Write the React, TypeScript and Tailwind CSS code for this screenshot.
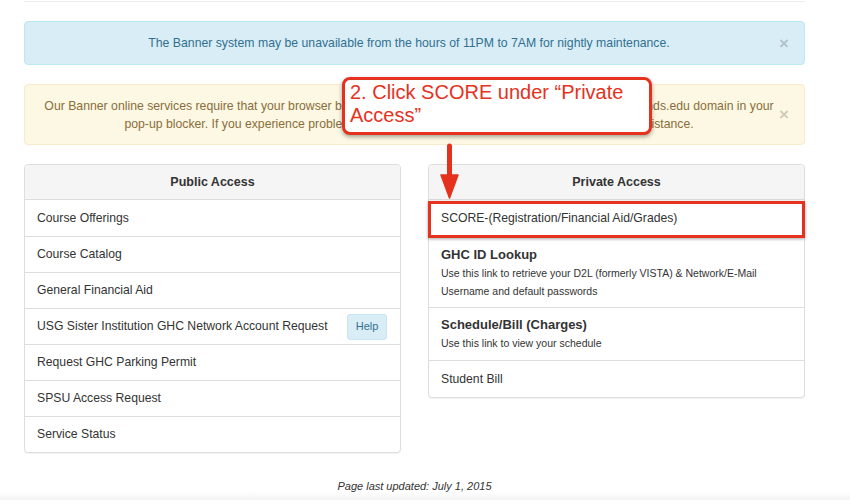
import React from 'react'

const publicLinks = [
  'Course Offerings',
  'Course Catalog',
  'General Financial Aid',
  'USG Sister Institution GHC Network Account Request',
  'Request GHC Parking Permit',
  'SPSU Access Request',
  'Service Status'
]

function CloseX() {
  return (
    <span className="w-[12px] shrink-0 text-center text-[17px] font-bold leading-none text-black/20">×</span>
  )
}

export default function App() {
  return (
    <div className="relative h-[500px] w-[850px] overflow-hidden bg-white font-['Liberation_Sans',Arial,sans-serif] text-[#333]">
      <div className="absolute inset-x-0 bottom-0 h-[8px] bg-gradient-to-b from-white to-[#f3f3f3]" />

      <div className="relative ml-[24px] w-[781px]">
        <div className="h-[2px] border-b border-[#eee]" />

        {/* Info alert */}
        <div className="mt-[19px] flex h-[44px] items-center rounded-[4px] border border-[#bce8f1] bg-[#d9edf7] pl-[15px] pr-[14px] text-[12.25px] text-[#31708f]">
          <p className="flex-1 text-center">
            The Banner system may be unavailable from the hours of 11PM to 7AM for nightly maintenance.
          </p>
          <CloseX />
        </div>

        {/* Warning alert */}
        <div className="mt-[19px] flex h-[61px] items-center rounded-[4px] border border-[#faebcc] bg-[#fcf8e3] pl-[15px] pr-[14px] text-[12.25px] leading-[18px] text-[#8a6d3b]">
          <p className="flex-1 text-center">
            Our Banner online services require that your browser be configured to allow all pop-up windows from the highlands.edu domain in your
            <br />
            pop-up blocker. If you experience problems, please contact the GHC Help Desk for additional assistance.
          </p>
          <CloseX />
        </div>

        {/* Panels */}
        <div className="mt-[19px] grid grid-cols-2 items-start gap-[27px]">
          <div className="overflow-hidden rounded-[4px] border border-[#ddd] bg-white shadow-[0_1px_1px_rgba(0,0,0,0.05)]">
            <div className="flex h-[35px] items-center justify-center border-b border-[#ddd] bg-[#f5f5f5] text-[12.5px] font-bold">
              Public Access
            </div>
            {publicLinks.map((name, i) => (
              <div
                key={name}
                className={`flex h-[36px] items-center justify-between pl-[12px] pr-[13px] text-[12.2px] ${i > 0 ? 'border-t border-[#ddd]' : ''}`}
              >
                <span>{name}</span>
                {name.startsWith('USG') && (
                  <span className="flex h-[26px] w-[40px] items-center justify-center rounded-[3px] border border-[#c9e4f2] bg-[#d9edf7] text-[11px] text-[#31708f]">
                    Help
                  </span>
                )}
              </div>
            ))}
          </div>

          <div className="rounded-[4px] border border-[#ddd] bg-white shadow-[0_1px_1px_rgba(0,0,0,0.05)]">
            <div className="flex h-[35px] items-center justify-center rounded-t-[4px] border-b border-[#ddd] bg-[#f5f5f5] text-[12.5px] font-bold">
              Private Access
            </div>
            <div className="relative flex h-[36px] items-center pl-[12px] text-[12.2px]">
              <span>SCORE-(Registration/Financial Aid/Grades)</span>
              <div className="absolute -left-px -right-px top-[1px] -bottom-[2px] border-[3px] border-[#e4321e] shadow-[0_1px_3px_rgba(0,0,0,0.35)]" />
            </div>
            <div className="border-t border-[#ddd] px-[12px] pt-[9px] pb-[7px]">
              <div className="text-[13px] font-bold leading-[18px]">GHC ID Lookup</div>
              <div className="text-[10.5px] leading-[18px]">
                Use this link to retrieve your D2L (formerly VISTA) &amp; Network/E-Mail
                <br />
                Username and default passwords
              </div>
            </div>
            <div className="border-t border-[#ddd] px-[12px] pt-[8px] pb-[8px]">
              <div className="text-[13px] font-bold leading-[18px]">Schedule/Bill (Charges)</div>
              <div className="text-[10.5px] leading-[18px]">Use this link to view your schedule</div>
            </div>
            <div className="flex h-[37px] items-center border-t border-[#ddd] pl-[12px] text-[12.2px]">
              Student Bill
            </div>
          </div>
        </div>

        <p className="mt-[26px] text-center text-[11px] italic leading-[14px] text-[#333]">Page last updated: July 1, 2015</p>
      </div>

      {/* Annotation callout */}
      <div className="absolute left-[342px] top-[77px] h-[58px] w-[310px] rounded-[8px] border-[3px] border-[#e4321e] bg-white px-[5px] pt-[1px] text-[20px] leading-[23px] text-[#e4321e] shadow-[0_2px_4px_rgba(0,0,0,0.35)]">
        2. Click SCORE under “Private
        <br />
        Access”
      </div>

      {/* Arrow */}
      <svg className="absolute left-[440px] top-[142px]" width="19" height="58" viewBox="0 0 19 58">
        <line x1="9.5" y1="4" x2="9.5" y2="36" stroke="#e4321e" strokeWidth="5" strokeLinecap="round" />
        <path d="M1 33 L18 33 L9.5 56 Z" fill="#e4321e" stroke="#e4321e" strokeWidth="1.5" strokeLinejoin="round" />
      </svg>
    </div>
  )
}
